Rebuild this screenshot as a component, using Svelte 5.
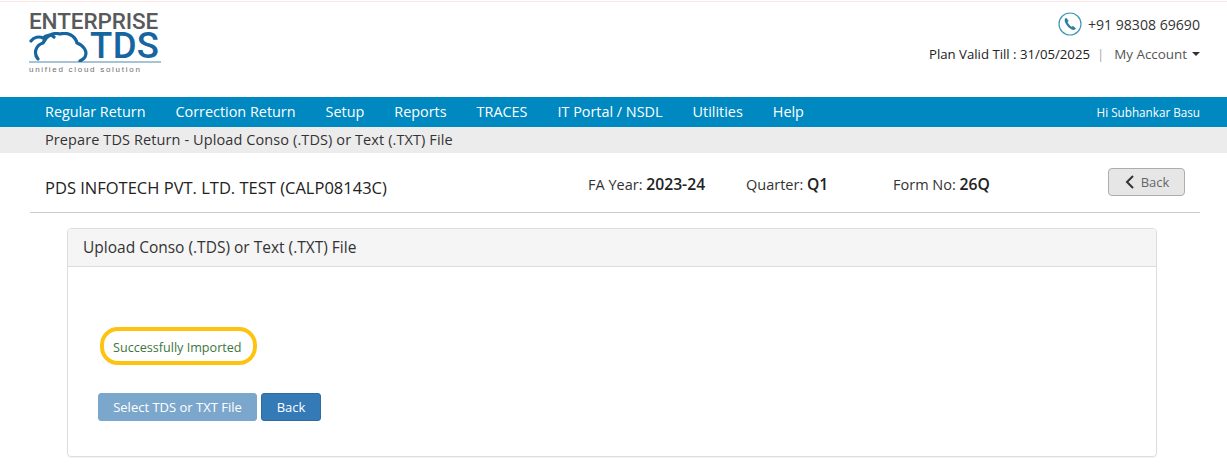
<script lang="ts">
const menu = ["Regular Return", "Correction Return", "Setup", "Reports", "TRACES", "IT Portal / NSDL", "Utilities", "Help"];
</script>

<div class="page">
	<header class="top">
		<div class="logo">
			<div class="logo-name">ENTERPRISE</div>
			<div class="logo-row">
				<svg class="cloud" width="60" height="30" viewBox="0 0 60 30" fill="none" stroke="#17659f" stroke-width="3.2" stroke-linecap="round">
					<path d="M2 9 C5 5 10 4 14 6 C17 3 22 2 25 5" />
					<path d="M9 27 C4 21 7 13 14 11 C17 4 24 0 31 2 C38 0 46 3 48 11 C54 13 59 19 56 25 C55 27 53 28 51 29" />
				</svg>
				<span class="logo-tds">TDS</span>
			</div>
			<div class="logo-tag">unified cloud solution</div>
		</div>
		<div class="contact">
			<div class="phone">
				<svg width="24" height="24" viewBox="0 0 24 24">
					<circle cx="12" cy="12" r="11" fill="#fff" stroke="#3f97b5" stroke-width="1.2" />
					<path d="M8.2 5.8 C7 6.3 6.4 7.6 6.8 9.2 C7.6 12.6 11 16.4 14.6 17.7 C16 18.2 17.4 17.6 17.9 16.5 L15.2 13.9 L13.7 14.8 C12 13.8 10.4 12 9.6 10.2 L10.6 8.8 Z" fill="#2f7f9f" />
				</svg>
				<span>+91 98308 69690</span>
			</div>
			<div class="account">
				<span class="plan">Plan Valid Till : 31/05/2025</span>
				<span class="sep">|</span>
				<span class="my">My Account</span>
				<span class="caret"></span>
			</div>
		</div>
	</header>

	<nav class="nav">
		<ul>
			{#each menu as item}
				<li>{item}</li>
			{/each}
		</ul>
		<span class="hi">Hi Subhankar Basu</span>
	</nav>

	<div class="crumb">Prepare TDS Return - Upload Conso (.TDS) or Text (.TXT) File</div>

	<div class="title-row">
		<h1>PDS INFOTECH PVT. LTD. TEST (CALP08143C)</h1>
		<div class="meta meta-fa">FA Year: <b>2023-24</b></div>
		<div class="meta meta-q">Quarter: <b>Q1</b></div>
		<div class="meta meta-form">Form No: <b>26Q</b></div>
		<button class="back-top">
			<svg width="11" height="14" viewBox="0 0 11 14" fill="none" stroke="#333" stroke-width="2"><path d="M9 1 L3 7 L9 13" /></svg>
			Back
		</button>
	</div>

	<section class="panel">
		<div class="panel-head">Upload Conso (.TDS) or Text (.TXT) File</div>
		<div class="panel-body">
			<div class="success">Successfully Imported</div>
			<div class="actions">
				<button class="btn btn-off">Select TDS or TXT File</button>
				<button class="btn btn-back">Back</button>
			</div>
		</div>
	</section>
</div>

<style>
	:global(body) {
		margin: 0;
		background: #fff;
	}

	.page {
		height: 468px;
		overflow: hidden;
		font-family: "Open Sans", "Noto Sans", sans-serif;
		color: #333;
		font-size: 13px;
	}

	.top {
		display: flex;
		justify-content: space-between;
		height: 95px;
		margin-top: 1px;
		padding: 0 27px 0 29px;
		border-top: 1px solid #fbe4e4;
	}

	.logo {
		width: 132px;
		padding-top: 9px;
		font-family: "Roboto", "Liberation Sans", sans-serif;
	}

	.logo-name {
		height: 20px;
		color: #58595b;
		font-size: 22.5px;
		line-height: 20px;
		font-weight: 500;
		letter-spacing: -0.1px;
		white-space: nowrap;
	}

	.logo-row {
		display: flex;
		align-items: flex-start;
		height: 30px;
		border-bottom: 2px solid #a7c3d6;
	}

	.cloud {
		flex: none;
		margin-top: 1px;
		margin-right: 1px;
	}

	.logo-tds {
		color: #17659f;
		font-size: 36.5px;
		font-weight: 500;
		line-height: 30px;
		letter-spacing: 0.4px;
		white-space: nowrap;
	}

	.logo-tag {
		margin-top: 2px;
		color: #6d6e71;
		font-family: "Liberation Sans", sans-serif;
		font-size: 8px;
		line-height: 10px;
		letter-spacing: 1.72px;
		white-space: nowrap;
	}

	.contact {
		display: flex;
		flex-direction: column;
		align-items: flex-end;
		padding-top: 10px;
	}

	.phone {
		display: flex;
		align-items: center;
		gap: 6px;
		height: 24px;
		color: #333;
		font-size: 14.1px;
	}

	.account {
		display: flex;
		align-items: center;
		margin-top: 6px;
		height: 24px;
		font-size: 13.2px;
	}

	.plan {
		color: #222;
	}

	.sep {
		margin: 0 10px 0 7px;
		color: #aaa;
	}

	.my {
		color: #555;
		font-size: 13.4px;
	}

	.caret {
		width: 0;
		height: 0;
		margin-left: 5px;
		border-top: 4px solid #333;
		border-left: 4px solid transparent;
		border-right: 4px solid transparent;
	}

	.nav {
		display: flex;
		justify-content: space-between;
		align-items: center;
		height: 30px;
		padding: 0 27px 0 45px;
		background: #0088c0;
		color: #fff;
	}

	.nav ul {
		display: flex;
		gap: 30px;
		margin: -2px 0 0;
		padding: 0;
		list-style: none;
		font-size: 14.4px;
	}

	.hi {
		font-size: 11.7px;
	}

	.crumb {
		height: 26px;
		padding-left: 45px;
		background: #ececec;
		font-size: 14.5px;
		line-height: 25px;
		letter-spacing: 0.1px;
		white-space: nowrap;
	}

	.title-row {
		display: flex;
		align-items: center;
		height: 59px;
		margin: 0 27px 0 30px;
		padding-left: 15px;
		border-bottom: 1px solid #ccc;
	}

	h1 {
		width: 543px;
		margin: 10px 0 0;
		color: #222;
		font-size: 16.5px;
		font-weight: 400;
		white-space: nowrap;
	}

	.meta {
		margin-top: 2px;
		font-size: 14.5px;
		white-space: nowrap;
	}

	.meta b {
		color: #222;
		font-weight: 600;
		font-size: 15.7px;
	}

	.meta-fa {
		width: 158px;
	}

	.meta-q {
		width: 147px;
	}

	.meta-form {
		width: 215px;
	}

	.back-top {
		display: flex;
		align-items: center;
		justify-content: center;
		gap: 6px;
		width: 77px;
		height: 28px;
		margin-top: -2px;
		padding: 0;
		border: 1px solid #adadad;
		border-radius: 4px;
		background: #e6e6e6;
		color: #666;
		font: inherit;
		font-size: 13px;
	}

	.panel {
		margin: 15px 70px 0 67px;
		height: 229px;
		border: 1px solid #ddd;
		border-radius: 4px;
		box-sizing: border-box;
		box-shadow: 0 1px 1px rgba(0, 0, 0, 0.05);
	}

	.panel-head {
		height: 37px;
		padding-left: 15px;
		background: #f5f5f5;
		border-bottom: 1px solid #ddd;
		font-size: 15.5px;
		line-height: 37px;
		border-radius: 3px 3px 0 0;
	}

	.panel-body {
		padding: 60px 30px 0;
	}

	.success {
		display: flex;
		align-items: center;
		width: 157px;
		height: 38px;
		margin-left: 2px;
		padding: 2px 0 0 9px;
		box-sizing: border-box;
		border: 4px solid #fdc30f;
		border-radius: 18px;
		color: #3c763d;
		font-size: 12.6px;
		white-space: nowrap;
	}

	.actions {
		display: flex;
		gap: 4px;
		margin-top: 28px;
	}

	.btn {
		height: 28px;
		padding: 0;
		border: 1px solid #2e6da4;
		border-radius: 3px;
		background: #337ab7;
		color: #fff;
		font: inherit;
		font-size: 13px;
	}

	.btn-back {
		width: 60px;
	}

	.btn-off {
		width: 159px;
		border-color: #7ba7cd;
		background: #7ba7cd;
	}
</style>
